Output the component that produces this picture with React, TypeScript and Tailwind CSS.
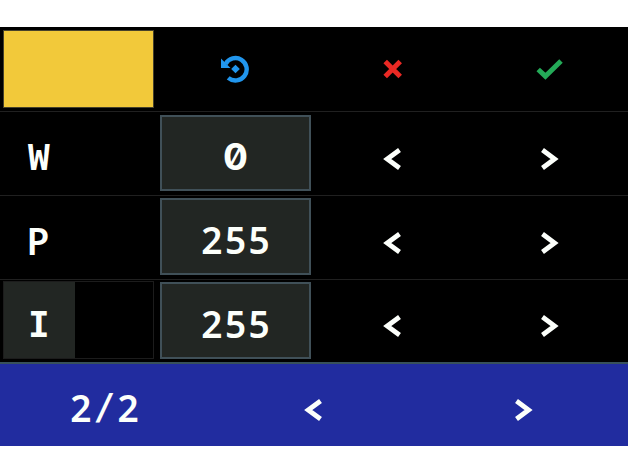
import React from 'react';

function Chevron({ right = false }: { right?: boolean }) {
  return (
    <svg width="18" height="22" viewBox="0 0 18 22" fill="none" className="block">
      <path d={right ? 'M1.5 2 13.6 11 1.5 20' : 'M16.5 2 4.2 11 16.5 20'} stroke="#fcfffb" strokeWidth="4.8" />
    </svg>
  );
}

function Mono({ text }: { text: string }) {
  return (
    <span className="flex">
      {text.split('').map((char, i) => (
        <span
          key={i}
          className={`flex w-[23.6px] justify-center ${
            char === '0'
              ? "font-['Inter',sans-serif] text-[37px] font-bold [font-feature-settings:'zero'_1]"
              : char === 'W' || char === 'I'
                ? "pt-[2px] font-['DejaVu_Sans_Mono',monospace] text-[36px]"
                : char === '/'
                  ? "font-['DejaVu_Sans_Mono',monospace] text-[36px]"
                  : "font-['Noto_Sans',sans-serif] text-[37px] font-semibold"
          }`}
        >
          {char}
        </span>
      ))}
    </span>
  );
}

const rows = [
  { label: 'W', value: '0' },
  { label: 'P', value: '255' },
  { label: 'I', value: '255' },
];

export default function App() {
  return (
    <div className="h-[472px] w-[628px] overflow-hidden bg-white pt-[27px] font-['DejaVu_Sans_Mono',monospace] text-[36px] leading-none font-bold text-[#fcfffb]">
      <div className="flex h-[419px] flex-col bg-black">
        <div className="grid h-[85px] grid-cols-[157px_157px_157px_157px] border-b border-[#202020]">
          <div className="mt-[3px] ml-[3px] h-[78px] w-[151px] border border-[#46412b] bg-[#f2c93a]" />
          <button className="flex items-center pl-[64px]" aria-label="Reset">
            <svg width="28" height="28" viewBox="0 0 28 28" className="block">
              <path d="M4.6 9A11.2 11.2 0 1 1 7.2 22.8" fill="none" stroke="#2196ed" strokeWidth="4.4" />
              <path d="M0 3.5V13H9.5Z" fill="#2196ed" />
              <path d="m14.5 9.7 4.3 4.3-4.3 4.3-4.3-4.3Z" fill="#2196ed" />
            </svg>
          </button>
          <button className="flex items-center pl-[69px]" aria-label="Cancel">
            <svg width="20" height="20" viewBox="0 0 20 20" className="block">
              <path d="m2.2 2.5 15 15m0-15-15 15" stroke="#ea2924" strokeWidth="5" />
            </svg>
          </button>
          <button className="flex items-center pl-[65px]" aria-label="Accept">
            <svg width="28" height="22" viewBox="0 0 28 22" className="block">
              <path d="m2.2 11.5 7.2 6.7L25 3" fill="none" stroke="#24aa58" strokeWidth="5" />
            </svg>
          </button>
        </div>
        {rows.map((row, i) => (
          <div key={row.label} className={`grid grid-cols-[160px_311px_157px] ${i === 2 ? 'h-[82px]' : 'h-[84px] border-b border-[#202020]'}`}>
            {i === 2 ? (
              <div className="mt-[1px] ml-[3px] flex h-[78px] w-[151px] border border-[#1c1c1c]">
                <div className="flex w-[71px] items-center bg-[#222623] pt-[7px] pl-[23px]"><Mono text={row.label} /></div>
              </div>
            ) : (
              <div className={`flex items-center ${i === 1 ? 'pt-[5px] pl-[26px]' : 'pt-[6px] pl-[27px]'}`}><Mono text={row.label} /></div>
            )}
            <div className="flex">
              <div className={`flex w-[151px] items-center justify-center border-2 border-[#405058] bg-[#222623] pt-[6px] ${i === 0 ? 'mt-[3px] h-[76px]' : 'mt-[2px] h-[77px]'}`}>
                <Mono text={row.value} />
              </div>
              <button className="flex items-center pt-[10px] pl-[72px]" aria-label="Decrease"><Chevron /></button>
            </div>
            <button className="flex items-center pt-[10px] pl-[70px]" aria-label="Increase"><Chevron right /></button>
          </div>
        ))}
        <div className="grid h-[84px] grid-cols-[209px_209px_210px] border-t-2 border-[#38515b] bg-[#212c9f]">
          <div className="flex items-center pt-[4px] pl-[69px]"><Mono text="2/2" /></div>
          <button className="flex items-center pt-[9px] pl-[95px]" aria-label="Previous page"><Chevron /></button>
          <button className="flex items-center pt-[9px] pl-[97px]" aria-label="Next page"><Chevron right /></button>
        </div>
      </div>
    </div>
  );
}
